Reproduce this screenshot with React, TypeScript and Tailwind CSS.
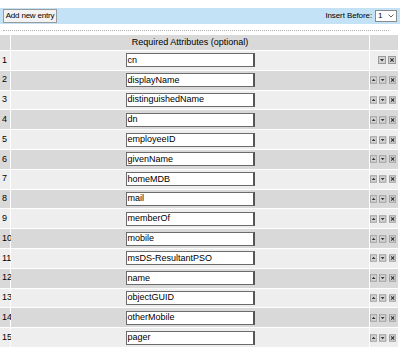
const ATTRS = [
  "cn",
  "displayName",
  "distinguishedName",
  "dn",
  "employeeID",
  "givenName",
  "homeMDB",
  "mail",
  "memberOf",
  "mobile",
  "msDS-ResultantPSO",
  "name",
  "objectGUID",
  "otherMobile",
  "pager",
];

function MiniButton({ kind }: { kind: "up" | "down" | "del" }) {
  return (
    <svg width="8" height="8" viewBox="0 0 8 8" className="block">
      <rect x="0.5" y="0.5" width="7" height="7" fill="#d4d4d4" stroke="#9a9a9a" />
      {kind === "up" && <polygon points="2,5 6,5 4,2.5" fill="#333" />}
      {kind === "down" && <polygon points="2,3 6,3 4,5.5" fill="#333" />}
      {kind === "del" && (
        <path d="M2.3 2.3 L5.7 5.7 M5.7 2.3 L2.3 5.7" stroke="#333" strokeWidth="1.1" />
      )}
    </svg>
  );
}

export default function App() {
  return (
    <div className="w-[400px] h-[349px] overflow-hidden bg-white pt-2 text-[9px] text-black font-['Liberation_Sans',Arial,sans-serif]">
      {/* ── Toolbar ─────────────────────────────────────────── */}
      <div className="flex items-center justify-between h-4 bg-[#c3e2f6] pl-[3px] pr-[3px]">
        <button className="h-[14px] w-[54px] bg-[#f2f2f2] border border-[#9a9a9a] leading-none text-[8px] tracking-[-0.2px]">
          Add new entry
        </button>
        <div className="flex items-center gap-[3px]">
          <span className="text-[8px] tracking-[-0.1px]">Insert Before:</span>
          <div className="flex items-center justify-between w-[22px] h-[12px] bg-white border border-[#8a8a8a] pl-[2px] pr-[2px]">
            <span className="leading-none text-[8px]">1</span>
            <svg width="6" height="4" viewBox="0 0 6 4">
              <path d="M0.5 0.5 L3 3 L5.5 0.5" stroke="#555" fill="none" strokeWidth="0.9" />
            </svg>
          </div>
        </div>
      </div>

      <div className="mx-[3px] mt-[6px] w-[386px] border-t border-dotted border-[#b0b0b0]" />

      {/* ── Attribute table ─────────────────────────────────── */}
      <div className="mt-1 grid grid-cols-[10px_358px_28px] gap-px w-[398px]">
        <div className="h-[15px] bg-[#d9d9d9]" />
        <div className="h-[15px] bg-[#d9d9d9] flex items-center justify-center">
          Required Attributes (optional)
        </div>
        <div className="h-[15px] bg-[#d9d9d9]" />

        {ATTRS.map((name, i) => {
          const bg = i % 2 === 0 ? "bg-[#eeeeee]" : "bg-[#d9d9d9]";
          return [
            <div key={name + "n"} className={`h-[18.8px] ${bg} flex items-center pl-[2px] whitespace-nowrap`}>
              {i + 1}
            </div>,
            <div key={name + "v"} className={`h-[18.8px] ${bg} flex items-center justify-center`}>
              <div className="w-[129px] h-[14px] bg-white border border-[#6b6b6b] border-r-2 border-r-[#555] flex items-center pl-[1px] leading-none">
                {name}
              </div>
            </div>,
            <div key={name + "a"} className={`h-[18.8px] ${bg} flex items-center justify-end gap-[2px] pr-[2px]`}>
              {i > 0 && <MiniButton kind="up" />}
              <MiniButton kind="down" />
              <MiniButton kind="del" />
            </div>,
          ];
        })}
      </div>
    </div>
  );
}
